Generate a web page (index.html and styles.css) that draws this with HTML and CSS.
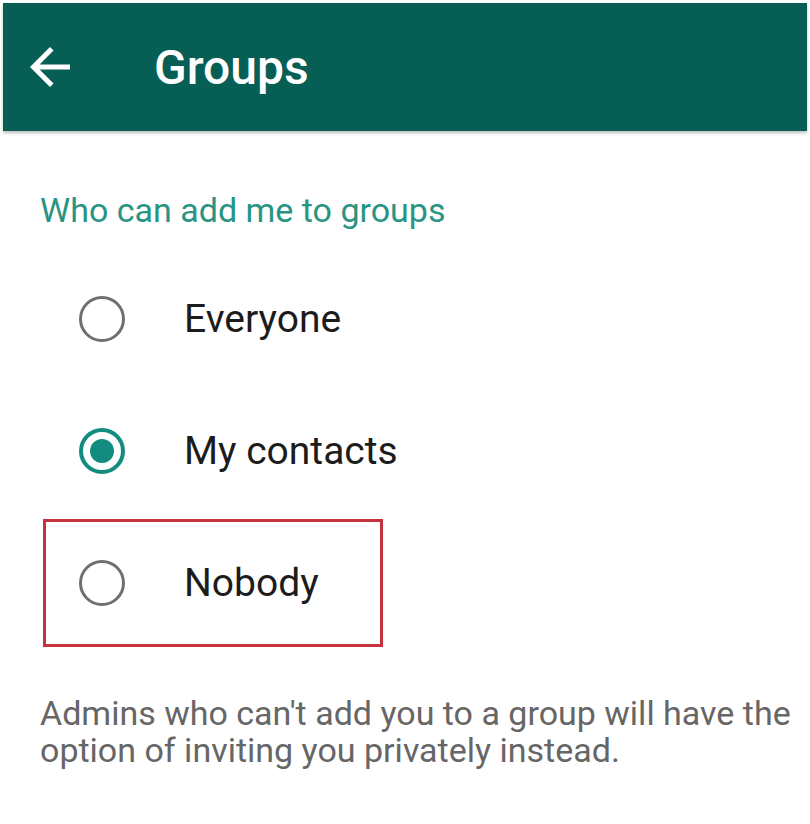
FILE: index.html
```html
<!DOCTYPE html>
<html lang="en">
<head>
    <meta charset="UTF-8">
    <meta name="viewport" content="width=device-width, initial-scale=1.0">
    <title>Groups</title>
    <link rel="stylesheet" href="styles.css">
</head>
<body>
    <!-- Toolbar -->
    <div class="toolbar">
        <button class="back-button" aria-label="Back">
            <svg width="60" height="60" viewBox="0 0 24 24">
                <path d="M20 11H7.83l5.59-5.59L12 4l-8 8 8 8 1.41-1.41L7.83 13H20v-2z" fill="#ffffff"/>
            </svg>
        </button>
        <h1>Groups</h1>
    </div>

    <!-- Settings -->
    <div class="content">
        <div class="section-title">Who can add me to groups</div>

        <div class="options">
            <label class="option">
                <span class="radio"></span>
                <span class="option-label">Everyone</span>
            </label>
            <label class="option">
                <span class="radio checked"></span>
                <span class="option-label">My contacts</span>
            </label>
            <label class="option highlight">
                <span class="radio"></span>
                <span class="option-label">Nobody</span>
            </label>
        </div>

        <p class="note">Admins who can't add you to a group will have the option of inviting you privately instead.</p>
    </div>
</body>
</html>
```

FILE: styles.css
```css
/* General Styles */
body {
    font-family: Roboto, "Noto Sans", Arial, sans-serif;
    margin: 0;
    padding: 0;
    background-color: #ffffff;
}

/* Toolbar */
.toolbar {
    display: flex;
    align-items: center;
    height: 128px;
    margin: 3px 3px 0 3px;
    background-color: #075e54;
    box-shadow: 0 2px 3px rgba(0, 0, 0, 0.25);
}

.back-button {
    display: flex;
    background: none;
    border: none;
    padding: 0;
    margin-left: 17px;
    cursor: pointer;
}

.toolbar h1 {
    margin: 0 0 0 74px;
    font-size: 48px;
    font-weight: 500;
    color: #ffffff;
}

/* Content */
.content {
    padding: 0 40px;
}

.section-title {
    margin-top: 59px;
    font-size: 34px;
    line-height: 40px;
    font-weight: 400;
    color: #2a9484;
}

.options {
    display: flex;
    flex-direction: column;
    gap: 4px;
    margin-top: 25px;
    margin-left: 3px;
}

.option {
    display: flex;
    align-items: center;
    width: 340px;
    height: 128px;
    box-sizing: border-box;
    border: 3px solid transparent;
    padding-left: 33px;
    cursor: pointer;
}

.option.highlight {
    border-color: #c6323d;
}

.radio {
    flex-shrink: 0;
    width: 46px;
    height: 46px;
    box-sizing: border-box;
    border: 3px solid #6f6f6f;
    border-radius: 50%;
    display: flex;
    align-items: center;
    justify-content: center;
}

.radio.checked {
    border: 4px solid #128c7e;
}

.radio.checked::after {
    content: "";
    width: 24px;
    height: 24px;
    border-radius: 50%;
    background-color: #128c7e;
}

.option-label {
    margin-left: 59px;
    font-size: 39px;
    font-weight: 400;
    color: #1c1c1c;
    white-space: nowrap;
}

.note {
    margin: 48px -30px 0 0;
    font-size: 34px;
    line-height: 37px;
    color: #666666;
}
```
